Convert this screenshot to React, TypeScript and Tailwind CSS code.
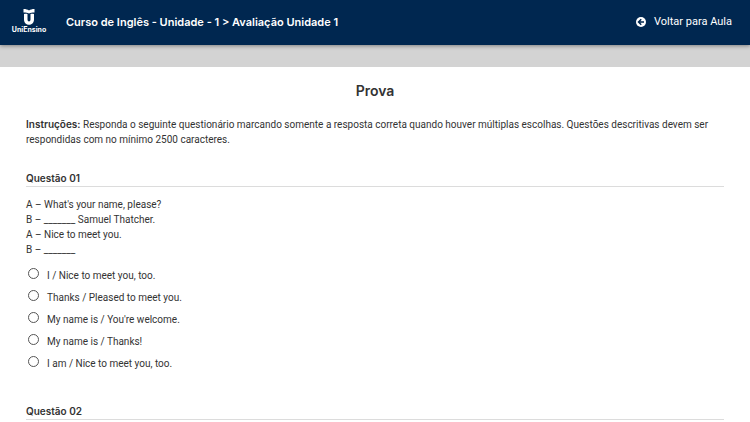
import { useState } from "react";

const options = [
  "I / Nice to meet you, too.",
  "Thanks / Pleased to meet you.",
  "My name is / You're welcome.",
  "My name is / Thanks!",
  "I am / Nice to meet you, too.",
];

function Logo() {
  return (
    <div className="flex w-9 flex-col items-center font-['Inter',sans-serif]">
      <svg viewBox="0 0 24 32" className="h-4 w-3" fill="#fff" aria-hidden="true">
        <path d="M1 0C6 0 9 1 12 3c3-2 6-3 11-3v7c-5 0-8 0-11 2C9 7 6 7 1 7z" />
        <path d="M2 10c3-1 5-1 7 0v11c0 5 6 5 6 0V10c2-1 4-1 7 0v11c0 14-20 14-20 0z" />
      </svg>
      <span className="text-[7px] leading-[9px] font-bold">UniEnsino</span>
    </div>
  );
}

function QuestionTitle({ children }: { children: string }) {
  return (
    <h2 className="border-b border-[#dcdcdc] font-['Inter',sans-serif] text-[10px] leading-[15px] font-semibold">
      {children}
    </h2>
  );
}

export default function App() {
  const [answer, setAnswer] = useState<number | null>(null);
  return (
    <div className="h-screen overflow-hidden bg-white font-['Roboto',sans-serif] text-[10px] leading-[15px] text-[#333]">
      <header className="relative flex items-center bg-[#002750] pt-[9px] pr-[18px] pb-[11px] pl-[11px] text-white shadow-[0_1px_4px_rgba(0,0,0,0.4)]">
        <Logo />
        <h1 className="ml-[19px] font-['Inter',sans-serif] text-[11px] leading-4 font-semibold">
          Curso de Inglês - Unidade - 1 &gt; Avaliação Unidade 1
        </h1>
        <a href="#aula" className="ml-auto flex items-center gap-2 text-[11px] leading-4">
          <svg viewBox="0 0 20 20" className="size-[10px]" aria-hidden="true">
            <circle cx="10" cy="10" r="10" fill="#fff" />
            <path
              d="M10.5 4.5 5 10l5.5 5.5M6 10h10"
              fill="none"
              stroke="#002750"
              strokeWidth="3"
            />
          </svg>
          Voltar para Aula
        </a>
      </header>
      <div className="h-[22px] bg-[#d3d3d3]" />
      <main className="px-[26px] pt-4">
        <h2 className="text-center font-['Inter',sans-serif] text-[14px] leading-4 font-semibold">Prova</h2>
        <p className="mt-[18px]">
          <strong className="font-['Inter',sans-serif] font-semibold">Instruções:</strong> Responda o
          seguinte questionário marcando somente a resposta correta quando houver múltiplas escolhas.
          Questões descritivas devem ser respondidas com no mínimo 2500 caracteres.
        </p>
        <section className="mt-6">
          <QuestionTitle>Questão 01</QuestionTitle>
          <p className="mt-[10px]">
            A – What's your name, please?
            <br />B – _______ Samuel Thatcher.
            <br />A – Nice to meet you.
            <br />B – _______
          </p>
          <fieldset className="mt-2" aria-label="Questão 01">
            {options.map((text, i) => (
              <label key={text} className="flex h-[22px] items-start">
                <input
                  type="radio"
                  name="q1"
                  checked={answer === i}
                  onChange={() => setAnswer(i)}
                  className="mt-[3px] ml-[2px] size-[11px] shrink-0 appearance-none rounded-full border border-[#555] bg-white checked:border-[3px]"
                />
                <span className="ml-2 pt-[3px]">{text}</span>
              </label>
            ))}
          </fieldset>
        </section>
        <section className="mt-[29px]">
          <QuestionTitle>Questão 02</QuestionTitle>
        </section>
      </main>
    </div>
  );
}
